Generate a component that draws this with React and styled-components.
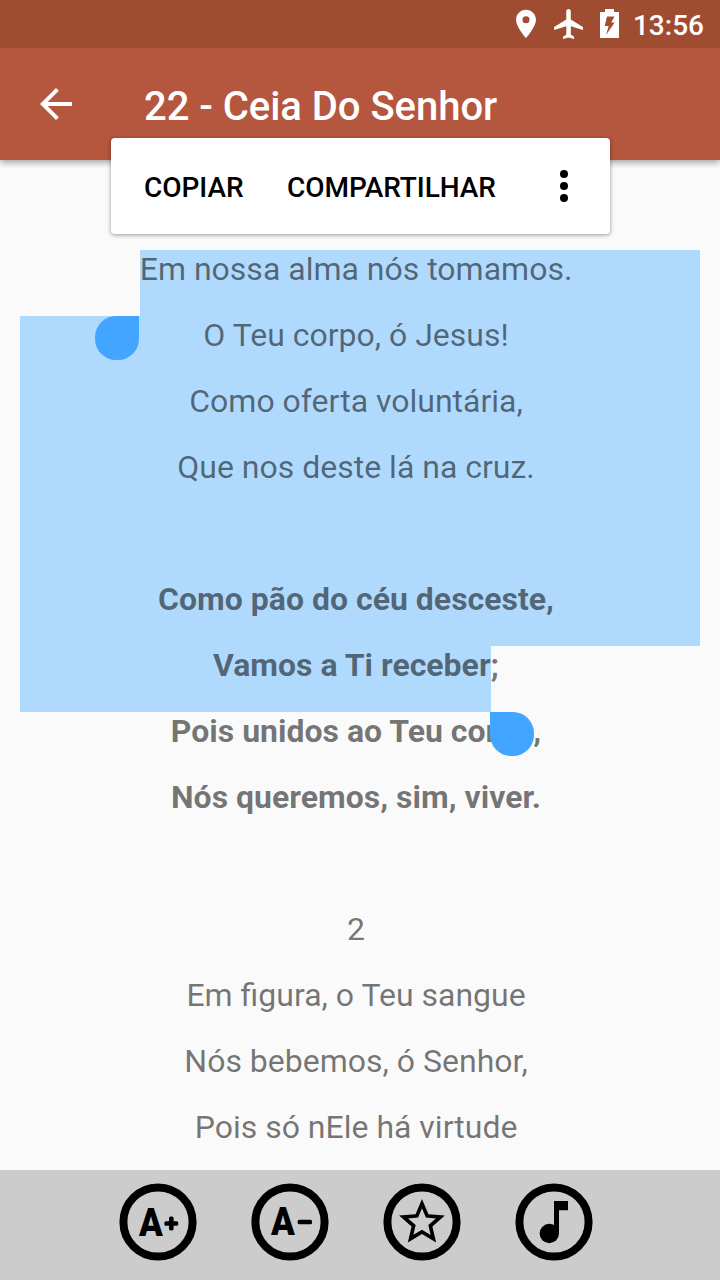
import styled, { createGlobalStyle } from "styled-components";

const lines = [
  { text: "Em nossa alma nós tomamos.", from: 120, to: 680 },
  { text: "O Teu corpo, ó Jesus!", from: 0, to: 680 },
  { text: "Como oferta voluntária,", from: 0, to: 680 },
  { text: "Que nos deste lá na cruz.", from: 0, to: 680 },
  { text: "", from: 0, to: 680 },
  { text: "Como pão do céu desceste,", bold: true, from: 0, to: 680 },
  { text: "Vamos a Ti receber;", bold: true, from: 0, to: 471 },
  { text: "Pois unidos ao Teu corpo,", bold: true },
  { text: "Nós queremos, sim, viver.", bold: true },
  { text: "" },
  { text: "2" },
  { text: "Em figura, o Teu sangue" },
  { text: "Nós bebemos, ó Senhor," },
  { text: "Pois só nEle há virtude" },
];

function RoundButton({ label, letterTop, children }) {
  return (
    <RoundButtonStyled aria-label={label}>
      <svg width="78" height="78" viewBox="0 0 78 78">
        <circle
          cx="39"
          cy="39"
          r="34.6"
          fill="none"
          stroke="#000"
          strokeWidth="8"
        />
        {children}
      </svg>
      {letterTop && <LetterStyled $top={letterTop}>A</LetterStyled>}
    </RoundButtonStyled>
  );
}

export default function App() {
  return (
    <>
      <GlobalStyle />
      <ScreenStyled>
        <StatusBarStyled>
          <svg width="34" height="34" viewBox="0 0 24 24" fill="currentColor">
            <path d="M12 2C8.13 2 5 5.13 5 9c0 5.25 7 13 7 13s7-7.75 7-13c0-3.87-3.13-7-7-7zm0 9.5a2.5 2.5 0 0 1 0-5 2.5 2.5 0 0 1 0 5z" />
          </svg>
          <svg width="36" height="36" viewBox="0 0 24 24" fill="currentColor">
            <path d="M21.3 16v-2L13.2 9V3.5c0-.83-.67-1.5-1.5-1.5s-1.5.67-1.5 1.5V9l-8.1 5v2l8.1-2.5V19l-2.2 1.5V22l3.7-1 3.7 1v-1.5L13.2 19v-5.5l8.1 2.5z" />
          </svg>
          <svg width="19" height="29" viewBox="0 0 19 29" fill="currentColor">
            <path
              fillRule="evenodd"
              d="M5 0h9v3h5v26H0V3h5zM7 7.5L4.7 17h4L6 26l8.7-12.5h-3.5L14.5 7.5z"
            />
          </svg>
          <ClockStyled>13:56</ClockStyled>
        </StatusBarStyled>
        <ToolbarStyled>
          <BackButtonStyled aria-label="Voltar">
            <svg width="48" height="48" viewBox="0 0 24 24" fill="currentColor">
              <path d="M20 11H7.83l5.59-5.59L12 4l-8 8 8 8 1.41-1.41L7.83 13H20v-2z" />
            </svg>
          </BackButtonStyled>
          <TitleStyled>22 - Ceia Do Senhor</TitleStyled>
        </ToolbarStyled>
        <LyricsStyled>
          {lines.map(({ text, bold, from, to }, index) => (
            <LineStyled key={index} $bold={bold} $from={from} $to={to}>
              {text + " "}
            </LineStyled>
          ))}
        </LyricsStyled>
        <BottomBarStyled>
          <RoundButton label="Aumentar" letterTop={18}>
            <rect x="45.4" y="38.2" width="13.8" height="4.6" rx="1.6" />
            <rect x="50" y="33.6" width="4.6" height="13.8" rx="1.6" />
          </RoundButton>
          <RoundButton label="Diminuir" letterTop={17}>
            <rect x="46.7" y="36.7" width="14.3" height="4.6" rx="1.6" />
          </RoundButton>
          <RoundButton label="Favorito">
            <path
              transform="translate(11.5 11.4) scale(2.29)"
              d="M22 9.24l-7.19-.62L12 2 9.19 8.63 2 9.24l5.46 4.73L5.82 21 12 17.27 18.18 21l-1.63-7.03L22 9.24zM12 15.4l-3.76 2.27 1-4.28-3.32-2.88 4.38-.38L12 6.1l1.71 4.04 4.38.38-3.32 2.88 1 4.28L12 15.4z"
            />
          </RoundButton>
          <RoundButton label="Tocar">
            <circle cx="34.3" cy="50.5" r="9.7" />
            <path d="M39 18h14v9.3h-9v23.2h-5z" />
          </RoundButton>
        </BottomBarStyled>
        <HandleStyled $x={95} $y={316} $start />
        <HandleStyled $x={490} $y={712} />
        <PopupStyled>
          <ActionStyled>COPIAR</ActionStyled>
          <ActionStyled>COMPARTILHAR</ActionStyled>
          <MoreStyled aria-label="Mais">
            <span />
            <span />
            <span />
          </MoreStyled>
        </PopupStyled>
      </ScreenStyled>
    </>
  );
}

const GlobalStyle = createGlobalStyle`
  * {
    box-sizing: border-box;
  }
  body {
    margin: 0;
    font-family: Roboto, "Liberation Sans", sans-serif;
  }
  button {
    font-family: inherit;
    border: none;
    background: none;
    padding: 0;
  }
  svg {
    display: block;
    flex-shrink: 0;
  }
`;
const ScreenStyled = styled.div`
  position: relative;
  display: flex;
  flex-direction: column;
  width: 720px;
  height: 1280px;
  overflow: hidden;
  background-color: #fafafa;
`;
const StatusBarStyled = styled.div`
  display: flex;
  align-items: center;
  justify-content: flex-end;
  flex-shrink: 0;
  height: 48px;
  padding-right: 16px;
  color: #fff;
  background-color: #a04c30;
  z-index: 2;
  svg:nth-child(2) {
    margin-left: 8px;
  }
  svg:nth-child(3) {
    margin: -1px 14px 0 13px;
  }
`;
const ClockStyled = styled.span`
  font-size: 28px;
  font-weight: 500;
  line-height: 33px;
  padding-top: 3px;
`;
const ToolbarStyled = styled.header`
  display: flex;
  align-items: center;
  flex-shrink: 0;
  height: 112px;
  padding-left: 32px;
  color: #fff;
  background-color: #b5563e;
  box-shadow: 0 2px 7px rgba(0, 0, 0, 0.4);
  z-index: 1;
`;
const BackButtonStyled = styled.button`
  color: #fff;
  margin-right: 64px;
`;
const TitleStyled = styled.h1`
  margin: 0;
  padding-top: 6px;
  font-size: 40px;
  font-weight: 500;
  line-height: 48px;
  letter-spacing: -0.04px;
`;
const LyricsStyled = styled.main`
  flex: 1;
  min-height: 0;
  overflow: hidden;
  padding: 90px 20px 0;
`;
const LineStyled = styled.p`
  height: 66px;
  margin: 0;
  font-size: 32px;
  font-weight: ${({ $bold }) => ($bold ? 700 : 400)};
  line-height: 38px;
  text-align: center;
  white-space: pre;
  color: rgba(0, 0, 0, 0.54);
  background: ${({ $from, $to }) =>
    $to
      ? `linear-gradient(#b0dafd, #b0dafd) ${$from}px 0 / ${$to - $from}px 100% no-repeat`
      : "none"};
`;
const BottomBarStyled = styled.footer`
  display: flex;
  justify-content: center;
  flex-shrink: 0;
  gap: 54px;
  height: 110px;
  padding: 13px 8px 0 0;
  background-color: #ccc;
`;
const RoundButtonStyled = styled.button`
  position: relative;
  width: 78px;
  height: 78px;
`;
const LetterStyled = styled.span`
  position: absolute;
  left: 20px;
  top: ${({ $top }) => $top}px;
  color: #000;
  font-size: 38px;
  font-weight: 900;
  line-height: 44px;
  transform: scaleX(0.92);
  transform-origin: left;
`;
const HandleStyled = styled.div`
  position: absolute;
  left: ${({ $x }) => $x}px;
  top: ${({ $y }) => $y}px;
  width: 44px;
  height: 44px;
  background-color: #42a5ff;
  border-radius: ${({ $start }) => ($start ? "21px 0 21px 21px" : "0 21px 21px 21px")};
`;
const PopupStyled = styled.div`
  position: absolute;
  left: 111px;
  top: 138px;
  z-index: 2;
  display: flex;
  align-items: center;
  width: 499px;
  height: 96px;
  padding: 0 42px 0 33px;
  background-color: #fff;
  border-radius: 4px;
  box-shadow: 0 1px 4px rgba(0, 0, 0, 0.4);
`;
const ActionStyled = styled.button`
  margin-right: 43.5px;
  padding-top: 4px;
  color: #000;
  font-size: 28px;
  font-weight: 500;
  line-height: 34px;
  letter-spacing: -0.05px;
`;
const MoreStyled = styled.button`
  display: flex;
  flex-direction: column;
  gap: 4px;
  margin-left: auto;
  span {
    width: 8px;
    height: 8px;
    border-radius: 50%;
    background-color: #000;
  }
`;
